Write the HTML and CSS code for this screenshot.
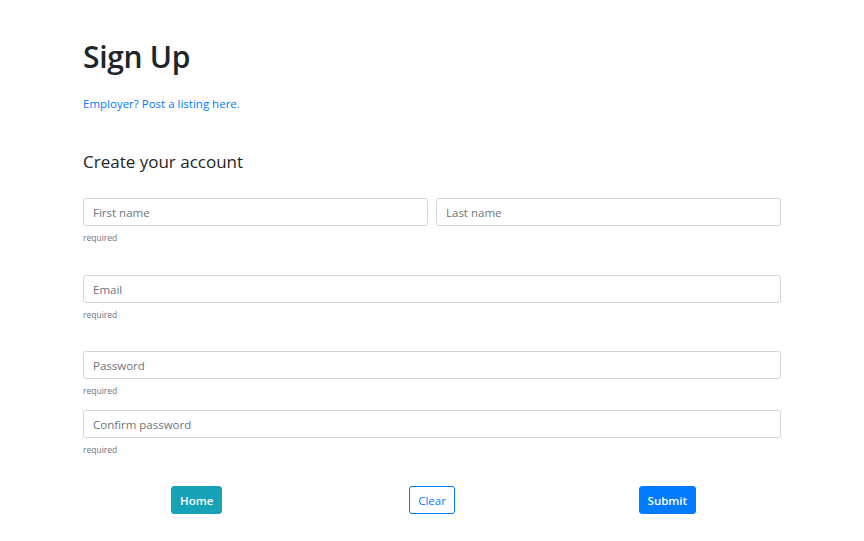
FILE: index.html
```html
<!DOCTYPE html>
<html lang="en">
<head>
<meta charset="utf-8">
<title>Sign Up</title>
<link rel="stylesheet" href="styles.css">
</head>
<body>
<div class="container">
  <h2 class="title">Sign Up</h2>
  <a class="employer" href="#">Employer? Post a listing here.</a>
  <h5 class="subtitle">Create your account</h5>
  <form class="form">
    <div class="row name-row">
      <div class="field"><input class="input" type="text" placeholder="First name"><small class="hint">required</small></div>
      <div class="field"><input class="input" type="text" placeholder="Last name"></div>
    </div>
    <div class="row email-row">
      <div class="field"><input class="input" type="email" placeholder="Email"><small class="hint">required</small></div>
    </div>
    <div class="row password-row">
      <div class="field"><input class="input" type="password" placeholder="Password"><small class="hint">required</small></div>
    </div>
    <div class="row confirm-row">
      <div class="field"><input class="input" type="password" placeholder="Confirm password"><small class="hint">required</small></div>
    </div>
    <div class="buttons">
      <div class="cell"><button type="button" class="btn btn-info">Home</button></div>
      <div class="cell"><button type="reset" class="btn btn-outline">Clear</button></div>
      <div class="cell"><button type="submit" class="btn btn-primary">Submit</button></div>
    </div>
  </form>
</div>
</body>
</html>
```

FILE: styles.css
```css
* { box-sizing: border-box; }
body {
  margin: 0;
  font-family: "Open Sans", "Noto Sans", sans-serif;
  color: #212529;
  background: #fff;
}
.container {
  width: 698px;
  margin: 0 auto;
  padding-top: 39px;
}
.title {
  margin: 0;
  font-size: 30px;
  font-weight: 600;
  letter-spacing: -0.3px;
  line-height: 1.2;
  color: #212529;
}
.employer {
  display: block;
  margin-top: 20px;
  font-size: 11.5px;
  line-height: 18px;
  color: #007bff;
  text-decoration: none;
}
.subtitle {
  margin: 39px 0 0;
  font-size: 17px;
  font-weight: 400;
  line-height: 1.2;
  color: #212529;
}
.form { margin-top: 26px; }
.row { display: flex; gap: 8px; }
.name-row { margin-bottom: 31px; }
.email-row { margin-bottom: 30px; }
.password-row { margin-bottom: 13px; }
.confirm-row { margin-bottom: 30px; }
.field { flex: 1; display: flex; flex-direction: column; }
.input {
  height: 28px;
  width: 100%;
  padding: 0 9px;
  border: 1px solid #ced4da;
  border-radius: 3px;
  font-family: inherit;
  font-size: 11.5px;
  color: #495057;
  background: #fff;
}
.input::placeholder { color: #6c757d; }
.hint {
  margin-top: 6px;
  font-size: 8.5px;
  line-height: 11px;
  color: #6c757d;
  height: 12px;
}
.buttons { display: flex; margin: 0 -4px; }
.cell { flex: 1; display: flex; justify-content: center; }
.btn {
  height: 28px;
  padding: 0 8px;
  border-radius: 3px;
  font-family: inherit;
  font-size: 11.5px;
  border: 1px solid transparent;
  cursor: pointer;
}
.btn-info { background: #17a2b8; border-color: #17a2b8; color: #fff; font-weight: 600; }
.btn-outline { background: #fff; border-color: #007bff; color: #007bff; }
.btn-primary { background: #007bff; border-color: #007bff; color: #fff; font-weight: 600; }
```
